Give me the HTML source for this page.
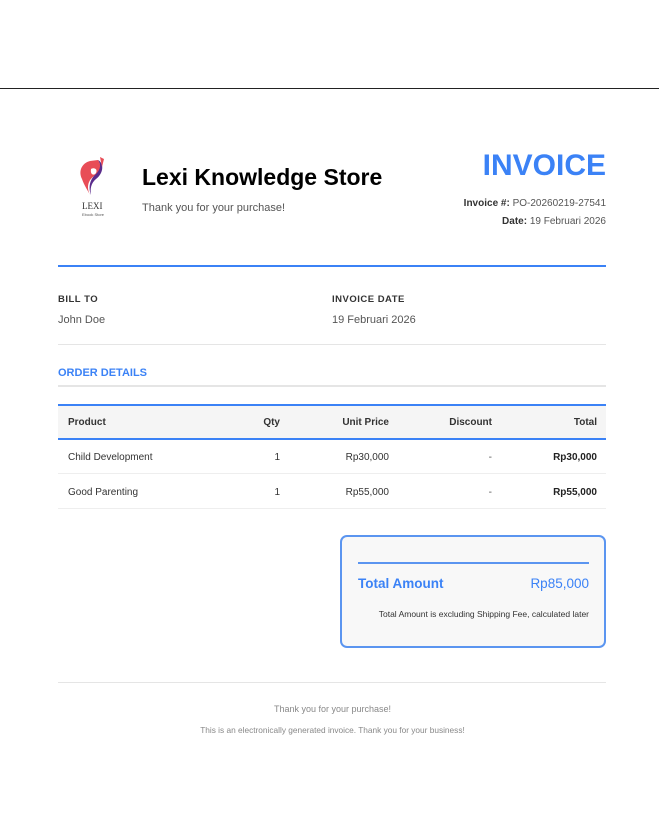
<!DOCTYPE html><html><head><style>
body{margin:0;width:659px;height:813px;background:#fff;font-family:"Liberation Sans",Arial,sans-serif;position:relative;overflow:hidden}
.a{position:absolute;white-space:nowrap}
.blue{color:#3b82f6}
.r{text-align:right}
</style></head><body>
<div class="a" style="left:0;top:88px;width:659px;height:1px;background:#222"></div>
<svg class="a" style="left:76px;top:155px" width="34" height="44" viewBox="0 0 34 44">
<path d="M14 6 C6 8 2 16 6 24 C8 30 12 36 14 40 C10 32 12 24 20 20 C24 17 26 10 22 5 Z" fill="#e84d57"/>
<path d="M22 5 C28 8 28 18 20 24 C15 28 14 34 15 40 C12 32 14 24 20 19 C25 14 25 9 22 5Z" fill="#5a2c8c"/>
<path d="M24 2 L28 4 L26 12 Z" fill="#e84d57"/>
<path d="M15 14 C18 12 22 14 20 18 C18 21 14 20 15 14Z" fill="#fff"/>
</svg>
<div class="a" style="left:82px;top:201px;font-family:'Liberation Serif',serif;font-size:9px;color:#333">LEXI</div>
<div class="a" style="left:82px;top:212px;font-size:4px;color:#555">Ebook Store</div>
<div class="a" style="left:142px;top:164px;font-size:23px;font-weight:bold;color:#000">Lexi Knowledge Store</div>
<div class="a" style="left:142px;top:202px;font-size:11px;color:#555">Thank you for your purchase!</div>
<div class="a r blue" style="right:53px;top:149px;font-size:30px;font-weight:bold">INVOICE</div>
<div class="a r" style="right:53px;top:198px;font-size:10px;color:#555"><b style="color:#333">Invoice #:</b> PO-20260219-27541</div>
<div class="a r" style="right:53px;top:216px;font-size:10px;color:#555"><b style="color:#333">Date:</b> 19 Februari 2026</div>
<div class="a" style="left:58px;top:265px;width:548px;height:2px;background:#3b82f6"></div>
<div class="a" style="left:58px;top:294px;font-size:9.5px;font-weight:bold;color:#333;letter-spacing:.5px">BILL TO</div>
<div class="a" style="left:58px;top:314px;font-size:11px;color:#555">John Doe</div>
<div class="a" style="left:332px;top:294px;font-size:9.5px;font-weight:bold;color:#333;letter-spacing:.5px">INVOICE DATE</div>
<div class="a" style="left:332px;top:314px;font-size:11px;color:#555">19 Februari 2026</div>
<div class="a" style="left:58px;top:344px;width:548px;height:1px;background:#e5e5e5"></div>
<div class="a blue" style="left:58px;top:367px;font-size:11px;font-weight:bold">ORDER DETAILS</div>
<div class="a" style="left:58px;top:385px;width:548px;height:2px;background:#e5e5e5"></div>
<div class="a" style="left:58px;top:404px;width:548px;box-sizing:border-box;height:36px;background:#f5f5f5;border-top:2px solid #3b82f6;border-bottom:2px solid #3b82f6"></div>
<div class="a" style="left:68px;top:417px;font-size:10px;font-weight:bold;color:#333">Product</div>
<div class="a r" style="right:379px;top:417px;font-size:10px;font-weight:bold;color:#333">Qty</div>
<div class="a r" style="right:270px;top:417px;font-size:10px;font-weight:bold;color:#333">Unit Price</div>
<div class="a r" style="right:167px;top:417px;font-size:10px;font-weight:bold;color:#333">Discount</div>
<div class="a r" style="right:62px;top:417px;font-size:10px;font-weight:bold;color:#333">Total</div>
<div class="a" style="left:68px;top:452px;font-size:10px;color:#333">Child Development</div>
<div class="a r" style="right:379px;top:452px;font-size:10px;color:#333">1</div>
<div class="a r" style="right:270px;top:452px;font-size:10px;color:#333">Rp30,000</div>
<div class="a r" style="right:167px;top:452px;font-size:10px;color:#555">-</div>
<div class="a r" style="right:62px;top:452px;font-size:10px;font-weight:bold;color:#222">Rp30,000</div>
<div class="a" style="left:58px;top:473px;width:548px;height:1px;background:#eee"></div>
<div class="a" style="left:68px;top:487px;font-size:10px;color:#333">Good Parenting</div>
<div class="a r" style="right:379px;top:487px;font-size:10px;color:#333">1</div>
<div class="a r" style="right:270px;top:487px;font-size:10px;color:#333">Rp55,000</div>
<div class="a r" style="right:167px;top:487px;font-size:10px;color:#555">-</div>
<div class="a r" style="right:62px;top:487px;font-size:10px;font-weight:bold;color:#222">Rp55,000</div>
<div class="a" style="left:58px;top:508px;width:548px;height:1px;background:#eee"></div>
<div class="a" style="left:340px;top:535px;width:266px;height:113px;box-sizing:border-box;border:2px solid #5b95f0;border-radius:7px;background:#f8f8f8"></div>
<div class="a" style="left:358px;top:562px;width:231px;height:2px;background:#5b95f0"></div>
<div class="a blue" style="left:358px;top:576px;font-size:13.5px;font-weight:bold">Total Amount</div>
<div class="a r blue" style="right:70px;top:576px;font-size:13.5px">Rp85,000</div>
<div class="a r" style="right:70px;top:609px;font-size:8.5px;color:#333">Total Amount is excluding Shipping Fee, calculated later</div>
<div class="a" style="left:58px;top:682px;width:548px;height:1px;background:#e5e5e5"></div>
<div class="a" style="left:0;width:665px;text-align:center;top:704px;font-size:9px;color:#888">Thank you for your purchase!</div>
<div class="a" style="left:0;width:665px;text-align:center;top:725px;font-size:8.3px;color:#888">This is an electronically generated invoice. Thank you for your business!</div>
</body></html>
